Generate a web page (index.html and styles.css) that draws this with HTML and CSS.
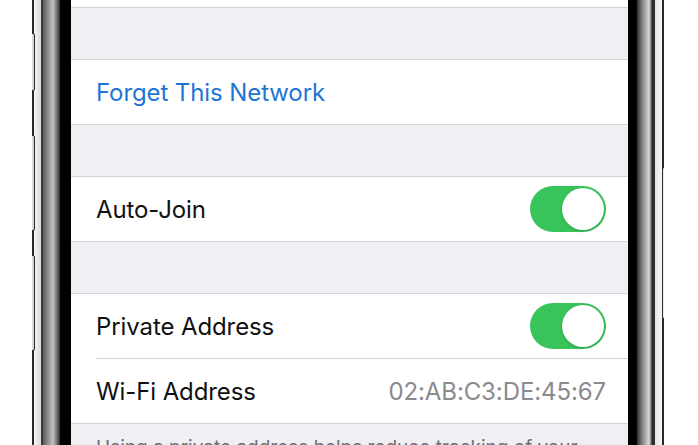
FILE: index.html
```html
<!DOCTYPE html>
<html lang="en">
<head>
<meta charset="utf-8">
<title>Wi-Fi Settings</title>
<link rel="stylesheet" href="styles.css">
</head>
<body>
<div class="device">
  <div class="rail rail-left">
    <span class="side-btn btn-1"></span>
    <span class="side-btn btn-2"></span>
    <span class="side-btn btn-3"></span>
  </div>
  <div class="screen">
    <div class="group group-stub"></div>
    <div class="gap"></div>
    <div class="group">
      <div class="cell"><div class="cell-body"><span class="label link">Forget This Network</span></div></div>
    </div>
    <div class="gap"></div>
    <div class="group">
      <div class="cell"><div class="cell-body"><span class="label">Auto-Join</span><span class="toggle on"><span class="knob"></span></span></div></div>
    </div>
    <div class="gap"></div>
    <div class="group">
      <div class="cell"><div class="cell-body"><span class="label">Private Address</span><span class="toggle on"><span class="knob"></span></span></div></div>
      <div class="cell"><div class="cell-body"><span class="label">Wi-Fi Address</span><span class="value">02:AB:C3:DE:45:67</span></div></div>
    </div>
    <p class="footer">Using a private address helps reduce tracking of your iPhone across different Wi-Fi networks.</p>
  </div>
  <div class="rail rail-right">
    <span class="side-btn btn-r"></span>
  </div>
</div>
</body>
</html>
```
FILE: styles.css
```css
* { box-sizing: content-box; }
html, body {
  margin: 0;
  padding: 0;
  background: #ffffff;
  height: 445px;
  overflow: hidden;
}
.device {
  display: flex;
  margin-left: 32px;
  width: 632px;
  height: 445px;
  overflow: hidden;
}
.rail {
  position: relative;
  flex: none;
  height: 445px;
}
.rail-left {
  width: 39px;
  background: linear-gradient(to right,
    #2a2a2a 0, #2a2a2a 2px,
    #f6f6f6 2px, #dadada 9px,
    #3a3a3a 9px, #3a3a3a 11px,
    #5a5a5a 11px, #999999 17px, #c2c2c2 21px, #707070 25px, #2a2a2a 28px,
    #000000 28px, #000000 39px);
}
.rail-right {
  width: 36px;
  background: linear-gradient(to right,
    #000000 0, #000000 9px,
    #2e2e2e 9px, #808080 14px, #b2b2b2 18px, #dadada 21px, #7a7a7a 23px,
    #2e2e2e 24px, #2e2e2e 27px,
    #e6e6e6 27px, #f7f7f7 34px,
    #2a2a2a 34px, #2a2a2a 36px);
}
.side-btn {
  position: absolute;
  width: 4px;
  background: linear-gradient(to right, #f2f2f2, #cfcfcf);
  border: 1px solid #2c2c2c;
  border-radius: 2px;
}
.btn-1 { left: -3px; top: 33px; height: 56px; }
.btn-2 { left: -3px; top: 135px; height: 94px; }
.btn-3 { left: -3px; top: 255px; height: 94px; }
.btn-r { left: 34px; top: 167px; height: 150px; width: 3px; }

.screen {
  flex: 1;
  min-width: 0;
  height: 445px;
  overflow: hidden;
  background: #efeff4;
  display: flex;
  flex-direction: column;
  font-family: "Inter", "Liberation Sans", sans-serif;
}
.screen > * {
  flex: none;
}
.group {
  background: #ffffff;
  border-top: 1px solid #d3d3d8;
  border-bottom: 1px solid #d3d3d8;
}
.group-stub {
  height: 7px;
  border-top: none;
}
.gap {
  height: 51px;
}
.cell {
  padding-left: 25px;
}
.cell-body {
  height: 64px;
  display: flex;
  align-items: center;
  justify-content: space-between;
  padding-right: 22px;
}
.cell + .cell .cell-body {
  border-top: 1px solid #d3d3d8;
}
.label {
  font-size: 24px;
  color: #111111;
  letter-spacing: -0.1px;
}
.link {
  color: #1f75d6;
}
.value {
  font-size: 24px;
  color: #8a8a8f;
  letter-spacing: -0.1px;
}
.toggle {
  width: 76px;
  height: 46px;
  border-radius: 23px;
  background: #38c35b;
  display: flex;
  align-items: center;
  justify-content: flex-end;
  box-sizing: border-box;
  padding-right: 2px;
}
.knob {
  width: 42px;
  height: 42px;
  border-radius: 50%;
  background: #ffffff;
  box-shadow: 0 1px 3px rgba(0, 0, 0, 0.18);
}
.footer {
  margin: 0;
  padding: 12px 22px 0 25px;
  font-size: 19px;
  line-height: 24px;
  color: #6d6d72;
}
```
